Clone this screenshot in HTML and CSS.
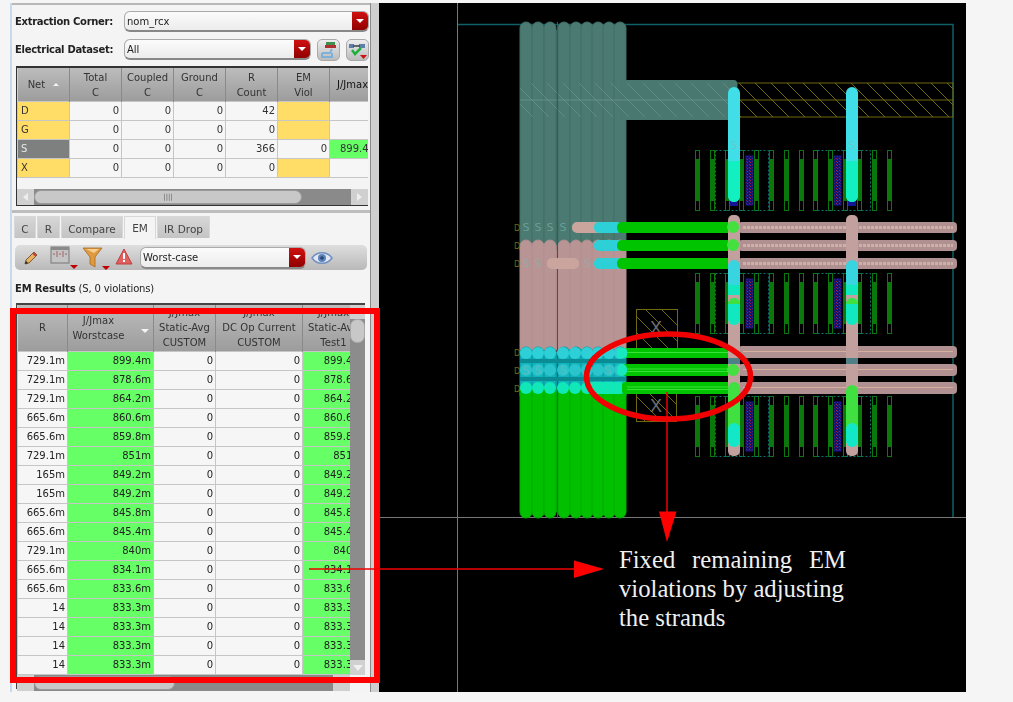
FILE: index.html
```html
<!DOCTYPE html>
<html lang="en">
<head>
<meta charset="utf-8">
<title>EM Results</title>
<link rel="stylesheet" href="styles.css">
</head>
<body>
<div class="page">
  <section class="panel">
    <div class="main">
      <div class="form-row first">
        <label class="form-label">Extraction Corner:</label>
        <div class="combo wide"><span class="combo-text">nom_rcx</span><span class="combo-btn"></span></div>
      </div>
      <div class="form-row">
        <label class="form-label">Electrical Dataset:</label>
        <div class="combo narrow"><span class="combo-text">All</span><span class="combo-btn"></span></div>
        <button class="icon-btn first-btn"><svg width="19" height="18" viewBox="0 0 19 18"><rect x="7" y="1" width="9" height="3" fill="#3f8f4f"/><rect x="6" y="4" width="11" height="3" fill="#b03030"/><path d="M3 12h8l2-4M3 12v4h10v-4" fill="none" stroke="#7fb0d8" stroke-width="2"/></svg></button>
        <button class="icon-btn"><svg width="19" height="18" viewBox="0 0 19 18"><rect x="1" y="3" width="5" height="4" fill="#5f7fa8"/><rect x="11" y="3" width="6" height="4" fill="#5f7fa8"/><path d="M5 5h7" stroke="#344" stroke-width="1.5"/><path d="M4 9l3 4 6-6" fill="none" stroke="#20b040" stroke-width="2.5"/><path d="M12 14h7l-3.500 4z" fill="#d01010"/></svg></button>
      </div>
      <div class="frame-top">
        <div class="clip-top">
          <table class="grid top-grid">
            <thead>
              <tr><th class="net">Net <span class="sort-up"></span></th><th>Total<br>C</th><th>Coupled<br>C</th><th>Ground<br>C</th><th>R<br>Count</th><th>EM<br>Viol</th><th class="last-head">J/Jmax</th></tr>
            </thead>
            <tbody>
              <tr><td class="name warn">D</td><td>0</td><td>0</td><td>0</td><td>42</td><td class="warn"></td><td></td></tr>
              <tr><td class="name warn">G</td><td>0</td><td>0</td><td>0</td><td>0</td><td class="warn"></td><td></td></tr>
              <tr><td class="name sel">S</td><td>0</td><td>0</td><td>0</td><td>366</td><td>0</td><td class="ok">899.4m</td></tr>
              <tr><td class="name warn">X</td><td>0</td><td>0</td><td>0</td><td>0</td><td class="warn"></td><td></td></tr>
            </tbody>
          </table>
        </div>
        <div class="hscroll top-scroll">
          <span class="sb-btn"><span class="arrow-left"></span></span>
          <span class="sb-track"><span class="sb-thumb thumb-top">||||</span></span>
          <span class="sb-btn"><span class="arrow-right"></span></span>
        </div>
      </div>
      <div class="divider"></div>
      <div class="tabs">
        <span class="tab tab-c">C</span><span class="tab tab-r">R</span><span class="tab tab-compare">Compare</span><span class="tab tab-em active">EM</span><span class="tab tab-ir">IR Drop</span>
      </div>
      <div class="toolbar">
        <svg class="tool pencil" width="16" height="16" viewBox="0 0 16 16"><path d="M2 14l1-4 8-8 3 3-8 8z" fill="#e8b060" stroke="#7a5a30"/><path d="M2 14l1-3 2 2z" fill="#222"/><path d="M10 3l3 3" stroke="#c04040" stroke-width="2"/></svg>
        <svg class="tool table-ico" width="30" height="26" viewBox="0 0 30 26"><rect x="1" y="1" width="18" height="16" fill="#c4c4c4" stroke="#777"/><rect x="1" y="1" width="18" height="3" fill="#8a8a8a"/><path d="M7 5v6M13 5v6M4 7v2M10 7v2M16 7v2" stroke="#a06060"/><path d="M20 19h8l-4 4z" fill="#c00000"/></svg>
        <svg class="tool funnel" width="30" height="26" viewBox="0 0 30 26"><path d="M1 1h19l-7 9v10l-5-3v-7z" fill="#e09a40" stroke="#a86a20" stroke-width=".8"/><path d="M4 2h13l-5 4z" fill="#f6cf90"/><path d="M20 19h8l-4 4z" fill="#c00000"/></svg>
        <svg class="tool warn-ico" width="18" height="18" viewBox="0 0 18 18"><path d="M9 1l8 15H1z" fill="#e06060" stroke="#c04040"/><path d="M8 5h2v6H8zM8 12h2v2H8z" fill="#fff"/></svg>
        <div class="combo tool-combo"><span class="combo-text">Worst-case</span><span class="combo-btn"></span></div>
        <svg class="tool eye" width="22" height="14" viewBox="0 0 22 14"><path d="M1 7c5-7 15-7 20 0-5 7-15 7-20 0z" fill="#dfe8f4" stroke="#6f8fc0" stroke-width="1.500"/><circle cx="11" cy="7" r="4" fill="#5f82b8"/><circle cx="11" cy="7" r="1.800" fill="#26456f"/></svg>
      </div>
      <p class="results-title"><b>EM Results</b> (S, 0 violations)</p>
      <div class="frame-bottom">
        <div class="bottom-body">
          <div class="clip-bottom">
            <table class="grid bottom-grid">
              <thead>
                <tr><th>R</th><th class="worst">J/Jmax<br>Worstcase<span class="sort-down"></span></th><th>J/Jmax<br>Static-Avg<br>CUSTOM</th><th>J/Jmax<br>DC Op Current<br>CUSTOM</th><th>J/Jmax<br>Static-Avg<br>Test1</th></tr>
              </thead>
              <tbody>
                <tr><td>729.1m</td><td class="ok">899.4m</td><td>0</td><td>0</td><td class="ok">899.4m</td></tr>
                <tr><td>729.1m</td><td class="ok">878.6m</td><td>0</td><td>0</td><td class="ok">878.6m</td></tr>
                <tr><td>729.1m</td><td class="ok">864.2m</td><td>0</td><td>0</td><td class="ok">864.2m</td></tr>
                <tr><td>665.6m</td><td class="ok">860.6m</td><td>0</td><td>0</td><td class="ok">860.6m</td></tr>
                <tr><td>665.6m</td><td class="ok">859.8m</td><td>0</td><td>0</td><td class="ok">859.8m</td></tr>
                <tr><td>729.1m</td><td class="ok">851m</td><td>0</td><td>0</td><td class="ok">851m</td></tr>
                <tr><td>165m</td><td class="ok">849.2m</td><td>0</td><td>0</td><td class="ok">849.2m</td></tr>
                <tr><td>165m</td><td class="ok">849.2m</td><td>0</td><td>0</td><td class="ok">849.2m</td></tr>
                <tr><td>665.6m</td><td class="ok">845.8m</td><td>0</td><td>0</td><td class="ok">845.8m</td></tr>
                <tr><td>665.6m</td><td class="ok">845.4m</td><td>0</td><td>0</td><td class="ok">845.4m</td></tr>
                <tr><td>729.1m</td><td class="ok">840m</td><td>0</td><td>0</td><td class="ok">840m</td></tr>
                <tr><td>665.6m</td><td class="ok">834.1m</td><td>0</td><td>0</td><td class="ok">834.1m</td></tr>
                <tr><td>665.6m</td><td class="ok">833.6m</td><td>0</td><td>0</td><td class="ok">833.6m</td></tr>
                <tr><td>14</td><td class="ok">833.3m</td><td>0</td><td>0</td><td class="ok">833.3m</td></tr>
                <tr><td>14</td><td class="ok">833.3m</td><td>0</td><td>0</td><td class="ok">833.3m</td></tr>
                <tr><td>14</td><td class="ok">833.3m</td><td>0</td><td>0</td><td class="ok">833.3m</td></tr>
                <tr><td>14</td><td class="ok">833.3m</td><td>0</td><td>0</td><td class="ok">833.3m</td></tr>
              </tbody>
            </table>
          </div>
          <div class="vscroll">
            <span class="vs-up"></span>
            <span class="vs-thumb"></span>
            <span class="vs-track"></span>
            <span class="vs-down"><span class="arrow-down"></span></span>
          </div>
        </div>
        <div class="hscroll bottom-scroll">
          <span class="sb-btn"></span>
          <span class="sb-track"><span class="sb-thumb thumb-bottom"></span></span>
          <span class="sb-btn"></span>
        </div>
      </div>
    </div>
    <div class="gutter"></div>
  </section>

  <section class="canvas">
    <svg class="layout" width="587" height="689" viewBox="379 3 587 689">
      <defs>
        <pattern id="hatch" patternUnits="userSpaceOnUse" width="16" height="16"><path d="M-1 -1L17 17" stroke="#6f6a10" stroke-width="1"/></pattern>
        <pattern id="hatch-soft" patternUnits="userSpaceOnUse" width="16" height="16"><path d="M-1 -1L17 17" stroke="#6f9a90" stroke-width="1"/></pattern>
        <pattern id="dots" patternUnits="userSpaceOnUse" width="3" height="3"><rect width="3" height="3" fill="#14146e"/><rect width="1" height="1" fill="#a02040"/><rect x="2" y="2" width="1" height="1" fill="#a02040"/></pattern>
        <clipPath id="c-teal"><rect x="515" y="15" width="120" height="235"/></clipPath>
        <clipPath id="c-pink"><rect x="515" y="238" width="120" height="115"/></clipPath>
        <clipPath id="c-cyan"><rect x="515" y="346" width="120" height="50"/></clipPath>
        <clipPath id="c-green"><rect x="515" y="388" width="120" height="135"/></clipPath>
        <g id="strands">
          <rect x="520" width="12" height="496" rx="6"/><rect x="532" width="12" height="496" rx="6"/><rect x="544" width="12" height="496" rx="6"/>
          <rect x="558" width="12" height="496" rx="6"/><rect x="570" width="12" height="496" rx="6"/><rect x="581" width="12" height="496" rx="6"/>
          <rect x="592" width="12" height="496" rx="6"/><rect x="603" width="12" height="496" rx="6"/><rect x="614" width="12" height="496" rx="6"/>
        </g>
        <g id="bumps">
          <circle cx="526" r="6"/><circle cx="538" r="6"/><circle cx="550" r="6"/><circle cx="563" r="6"/><circle cx="575" r="6"/><circle cx="587" r="6"/><circle cx="598" r="6"/><circle cx="609" r="6"/><circle cx="620" r="6"/>
        </g>
        <g id="finger">
          <rect x=".5" y=".5" width="4" height="60" fill="none" stroke="#0a780a"/>
          <rect x="1" y="9" width="3" height="42" fill="#0a780a"/>
        </g>
        <g id="block">
          <use href="#finger" x="695"/><use href="#finger" x="710"/><use href="#finger" x="725"/><use href="#finger" x="739"/><use href="#finger" x="754"/><use href="#finger" x="769"/><use href="#finger" x="784"/>
          <use href="#finger" x="799"/><use href="#finger" x="813"/><use href="#finger" x="828"/><use href="#finger" x="843"/><use href="#finger" x="857"/><use href="#finger" x="872"/><use href="#finger" x="887"/>
          <rect x="715.500" y=".5" width="53" height="60" fill="none" stroke="#0f7070" stroke-dasharray="2 2"/>
          <rect x="817.500" y=".5" width="53" height="60" fill="none" stroke="#0f7070" stroke-dasharray="2 2"/>
          <rect x="746" y="6" width="7" height="49" fill="url(#dots)" stroke="#141496"/>
          <rect x="834" y="6" width="7" height="49" fill="url(#dots)" stroke="#141496"/>
          <rect x="730" y="48" width="8" height="8" fill="#141496"/>
          <rect x="848" y="48" width="8" height="8" fill="#141496"/>
        </g>
      </defs>

      <path class="teal-line" d="M457 24.500H953V517"/>
      <path class="cross" d="M457.500 3V692M379 517.500H966"/>

      <g transform="translate(0 150)"><use href="#block"/></g>
      <g transform="translate(0 273)"><use href="#block"/></g>
      <g transform="translate(0 396)"><use href="#block"/></g>

      <rect x="737" y="83" width="216" height="34" fill="url(#hatch)" stroke="#6f6a10"/>
      <path d="M737 100H953" stroke="#6f6a10"/>

      <rect x="636.500" y="309.500" width="41" height="40" fill="url(#hatch)" stroke="#6f6a10"/>
      <rect x="636.500" y="390.500" width="40" height="31" fill="url(#hatch)" stroke="#6f6a10"/>
      <text class="x-label" x="656" y="334">X</text>
      <text class="x-label" x="656" y="412">X</text>

      <rect x="520" y="240" width="106" height="110" class="base-pink"/>
      <rect x="520" y="30" width="106" height="215" class="base-teal"/>
      <rect x="520" y="352" width="106" height="40" class="base-cyan"/>
      <rect x="520" y="392" width="106" height="120" class="base-green"/>

      <g clip-path="url(#c-teal)"><use href="#strands" y="22" class="st-teal"/></g>
      <rect x="620" y="80" width="117" height="40" rx="3" fill="#48786f"/>
      <rect x="520" y="83" width="217" height="34" fill="url(#hatch-soft)" opacity=".55"/>
      <path d="M520 100H737" stroke="#6f9a90" opacity=".7"/>
      <g clip-path="url(#c-pink)"><use href="#strands" y="240" class="st-pink"/></g>
      <g clip-path="url(#c-cyan)"><use href="#strands" y="347" class="st-cyan"/></g>
      <g clip-path="url(#c-green)"><use href="#strands" y="22" class="st-green"/></g>
      <path d="M557.500 22V518" stroke="#3a5a56" stroke-width="1"/>

      <rect x="520" y="359" width="106" height="4" fill="#0a8c94"/>
      <rect x="520" y="377" width="106" height="4" fill="#0a8c94"/>
      <use href="#bumps" y="353" class="b-cyan"/>
      <use href="#bumps" y="370" class="b-cyan2"/>
      <use href="#bumps" y="388" class="b-mint"/>
      <rect x="585" y="382" width="41" height="12" rx="6" fill="#10e8b8"/>

      <g class="pink-bars">
        <rect x="738" y="222" width="219" height="11" rx="4"/><rect x="738" y="240" width="219" height="11" rx="4"/><rect x="738" y="258" width="219" height="11" rx="4"/>
        <rect x="738" y="346" width="219" height="12" rx="4"/><rect x="738" y="364" width="219" height="12" rx="4"/><rect x="738" y="382" width="219" height="12" rx="4"/>
      </g>
      <path class="pink-tex" d="M743 227.500H953M743 245.500H953M743 263.500H953"/>
      <path class="pink-thin" d="M743 351.500H953M743 369.500H953M743 387.500H953"/>

      <rect x="572" y="222" width="36" height="11" rx="5" fill="#c9a59e"/>
      <rect x="547" y="258" width="32" height="11" rx="5" fill="#c9a59e"/>
      <rect x="594" y="222" width="28" height="11" rx="5" fill="#2ed0d8"/>
      <rect x="594" y="240" width="28" height="11" rx="5" fill="#2ed0d8"/>
      <rect x="594" y="258" width="28" height="11" rx="5" fill="#2ed0d8"/>
      <g class="green-bars">
        <rect x="617" y="222" width="121" height="11" rx="5"/><rect x="617" y="240" width="121" height="11" rx="5"/><rect x="617" y="258" width="121" height="11" rx="5"/>
        <rect x="622" y="348" width="116" height="10" rx="3"/><rect x="622" y="364" width="116" height="12" rx="3"/><rect x="622" y="382" width="116" height="12" rx="3"/>
      </g>
      <path class="green-thin" d="M627 352.500H732M627 369H732M627 371.500H732M627 387H732M627 389.500H732"/>
      <rect x="617" y="348" width="10" height="10" rx="3" fill="#18e8c0"/>
      <rect x="617" y="364" width="10" height="12" rx="5" fill="#18e8c0"/>

      <g class="v-pink"><rect x="728" y="215" width="12" height="241" rx="5"/><rect x="846" y="215" width="12" height="241" rx="5"/></g>
      <rect x="728" y="358" width="12" height="6" fill="#4f8088"/>
      <rect x="846" y="358" width="12" height="6" fill="#4f8088"/>
      <g class="ends"><circle cx="733" cy="227" r="6"/><circle cx="733" cy="245" r="6"/><circle cx="733" cy="370" r="6"/></g>

      <rect x="728" y="87" width="12" height="115" rx="6" fill="#40dfe8"/>
      <rect x="846" y="87" width="12" height="115" rx="6" fill="#40dfe8"/>
      <path d="M728 161h12v35a6 6 0 0 1-12 0z" fill="#12efc0"/>
      <path d="M846 161h12v35a6 6 0 0 1-12 0z" fill="#12efc0"/>

      <rect x="728" y="260" width="12" height="34" rx="6" fill="#38d4e0"/>
      <rect x="846" y="260" width="12" height="34" rx="6" fill="#38d4e0"/>
      <rect x="728" y="285" width="12" height="10" fill="#12e8c0"/>
      <rect x="846" y="285" width="12" height="10" fill="#12e8c0"/>
      <rect x="728" y="298" width="12" height="27" rx="6" fill="#12e8c0"/>
      <rect x="846" y="298" width="12" height="27" rx="6" fill="#12e8c0"/>
      <path d="M728 304a6 6 0 0 1 12 0" fill="#40e040"/>
      <path d="M846 304a6 6 0 0 1 12 0" fill="#40e040"/>

      <rect x="728" y="382" width="12" height="50" rx="6" fill="#3fe03f"/>
      <rect x="846" y="385" width="12" height="47" rx="6" fill="#3fe03f"/>
      <rect x="728" y="423" width="12" height="24" rx="6" fill="#12e8c8"/>
      <rect x="846" y="423" width="12" height="24" rx="6" fill="#12e8c8"/>

      <g class="s-labels">
        <text x="526" y="231">S</text><text x="538" y="231">S</text><text x="550" y="231">S</text><text x="563" y="231">S</text>
        <text x="526" y="267">S</text><text x="538" y="267">S</text><text x="587" y="267">S</text>
        <text x="526" y="374">S</text><text x="538" y="374">S</text><text x="563" y="374">S</text><text x="608" y="374">S</text>
        <text x="734" y="149">S</text><text x="852" y="149">S</text>
      </g>
      <g class="d-labels">
        <text x="517" y="231">D</text><text x="517" y="249">D</text><text x="517" y="267">D</text>
        <text x="517" y="356">D</text><text x="517" y="374">D</text><text x="517" y="392">D</text>
      </g>
    </svg>
  </section>

  <svg class="marks" width="1013" height="702" viewBox="0 0 1013 702">
    <rect x="13" y="311" width="364" height="369" fill="none" stroke="#ff0000" stroke-width="6"/>
    <ellipse cx="668.500" cy="376.500" rx="82" ry="42.500" fill="none" stroke="#f00000" stroke-width="5.500"/>
    <path d="M667 392V512M309 569H575" stroke="#f00000" stroke-width="1.500" fill="none"/>
    <path d="M659 511.500H676.500L667 542zM574 560.500V578L604 569z" fill="#ff0000"/>
  </svg>
  <p class="note"><span class="note-line spread">Fixed remaining EM</span><span class="note-line">violations by adjusting</span><span class="note-line">the strands</span></p>
</div>
</body>
</html>
```

FILE: styles.css
```css
* { box-sizing: border-box; }
html, body { margin: 0; padding: 0; }
body { background: #f5f5f5; font-family: "DejaVu Sans", sans-serif; color: #222; overflow: hidden; }

.page { position: relative; width: 1013px; height: 702px; padding: 3px 0 0 10px; display: flex; align-items: flex-start; }

/* left panel */
.panel { width: 369px; height: 689px; display: flex; border-left: 2px solid #c5d9ef; filter: blur(.3px); flex: none; }
.main { width: 358px; flex: none; background: #f4f4f4; border-top: 2px solid #b8b8b8; font-size: 10px; }
.gutter { width: 9px; flex: none; background: #cfcfcf; border-left: 1px solid #8a8a8a; }

.form-row { display: flex; align-items: center; height: 21px; margin: 7px 0 0 3px; }
.form-row.first { margin-top: 6px; }
.form-label { width: 109px; font-weight: bold; font-size: 10px; letter-spacing: -.3px; flex: none; }
.combo { height: 21px; display: flex; justify-content: space-between; background: linear-gradient(#fbfbfb, #ececec); border: 1px solid #aaa; border-bottom: 2px solid #888; border-radius: 6px; overflow: hidden; }
.combo.wide { width: 245px; }
.combo.narrow { width: 187px; }
.combo-text { padding: 3px 0 0 2px; font-size: 10px; line-height: 14px; }
.combo-btn { width: 16px; background: linear-gradient(#d01010, #900000); display: flex; align-items: center; justify-content: center; }
.combo-btn::after { content: ""; border: 4px solid transparent; border-top: 4px solid #fff; border-bottom: 0; }
.icon-btn { width: 23px; height: 22px; margin-left: 6px; padding: 0; background: linear-gradient(#eee, #bbb); border: 1px solid #aaa; border-radius: 5px; display: flex; align-items: center; justify-content: center; }
.first-btn { margin-left: 6px; }

.frame-top { margin: 6px 0 0 4px; width: 352px; height: 140px; border-top: 2px solid #333; border-left: 1px solid #333; border-bottom: 1px solid #333; display: flex; flex-direction: column; }
.clip-top { height: 120px; overflow: hidden; }
.grid { border-collapse: collapse; table-layout: fixed; font-size: 10px; background: #f6f6f6; }
.grid th { background: linear-gradient(#bcbcbc, #9c9c9c); font-weight: normal; border-right: 1px solid #8a8a8a; border-left: 1px solid #d0d0d0; text-align: center; line-height: 15px; padding: 0; color: #333; }
.grid td { height: 19px; padding: 0 2px 0 0; border: 1px solid #c6c6c6; text-align: right; white-space: nowrap; overflow: hidden; line-height: 14px; }
.top-grid { width: 364px; }
.top-grid th { height: 33px; width: 52px; padding-top: 1px; }
.top-grid th.last-head { width: 52px; white-space: nowrap; text-align: left; padding-left: 7px; color: #111; }
.top-grid td { color: #333; }
.top-grid td.name { text-align: left; padding-left: 3px; }
.warn { background: #ffdd66; }
.sel { background: #7d807e; color: #e8e8e8 !important; }
.ok { background: #66ff66; }
.top-grid td.ok { padding-right: 0; text-align: left; padding-left: 10px; }
.sort-up { display: inline-block; margin: 0 0 2px 5px; border: 3px solid transparent; border-bottom: 3px solid #f4f4f4; border-top: 0; }
.sort-down { display: block; position: absolute; right: 4px; top: 24px; border: 4px solid transparent; border-top: 4px solid #f4f4f4; border-bottom: 0; }
.worst { position: relative; }

.hscroll { display: flex; height: 16px; flex: none; }
.sb-btn { width: 17px; background: #d0d0d0; display: flex; align-items: center; justify-content: center; flex: none; }
.sb-track { flex: 1; background: #8a8a8a; display: block; }
.sb-thumb { display: block; height: 14px; margin-top: 1px; background: #c8c8c8; border: 1px solid #999; border-radius: 7px; color: #666; font-size: 7px; line-height: 12px; text-align: center; }
.thumb-top { width: 268px; }
.thumb-bottom { width: 141px; }
.arrow-left { border: 4px solid transparent; border-right: 5px solid #eee; border-left: 0; }
.arrow-right { border: 4px solid transparent; border-left: 5px solid #eee; border-right: 0; }
.top-scroll { margin-top: 1px; }

.divider { height: 3px; margin-top: 4px; background: #bdbdbd; }

.tabs { display: flex; gap: 1px; margin: 3px 0 0 2px; height: 22px; }
.tab { height: 22px; display: flex; align-items: center; justify-content: center; padding-top: 3px; background: linear-gradient(#d6d6d6, #c4c4c4); border: 1px solid #d8d8d8; border-bottom: 0; font-size: 10.500px; color: #444; flex: none; }
.tab.active { background: #f4f4f4; height: 23px; padding-top: 0; }
.tab-c { width: 22px; }
.tab-r { width: 23px; }
.tab-compare { width: 62px; }
.tab-em { width: 32px; }
.tab-ir { width: 53px; }

.toolbar { display: flex; align-items: center; height: 25px; margin: 7px 0 0 3px; width: 352px; background: linear-gradient(#dedede, #b9b9b9); border-radius: 5px; position: relative; }
.tool { display: block; flex: none; }
.pencil { margin-left: 8px; }
.table-ico { margin: 3px 0 0 11px; }
.funnel { margin: 4px 0 0 2px; }
.warn-ico { margin: -1px 0 0 3px; }
.tool-combo { width: 166px; margin-left: 7px; height: 22px; }
.tool-combo .combo-btn { width: 16px; }
.eye { margin-left: 5px; }

.results-title { margin: 13px 0 0 3px; font-size: 10px; line-height: 12px; letter-spacing: -.15px; }

.frame-bottom { margin: 8px 0 0 4px; width: 349px; height: 386px; border-top: 2px solid #444; border-left: 1px solid #444; display: flex; flex-direction: column; }
.bottom-body { display: flex; height: 370px; flex: none; }
.clip-bottom { width: 333px; overflow: hidden; flex: none; }
.bottom-grid { width: 347px; }
.bottom-grid th { height: 46px; line-height: 15px; white-space: nowrap; letter-spacing: .05px; }
.bottom-grid th:nth-child(1) { width: 50px; }
.bottom-grid th:nth-child(2) { width: 86px; padding-right: 24px; }
.bottom-grid th:nth-child(3) { width: 62px; }
.bottom-grid th:nth-child(4) { width: 87px; }
.bottom-grid th:nth-child(5) { width: 62px; }
.vscroll { width: 15px; display: flex; flex-direction: column; background: #8c8c8c; flex: none; }
.vs-up { height: 14px; background: #cfcfcf; }
.vs-thumb { height: 24px; background: #c8c8c8; border: 1px solid #a8a8a8; border-radius: 7px; }
.vs-track { flex: 1; }
.vs-down { height: 15px; background: #d0d0d0; display: flex; align-items: center; justify-content: center; }
.arrow-down { border: 5px solid transparent; border-top: 6px solid #f0f0f0; border-bottom: 0; }
.bottom-scroll { width: 333px; background: #8a8a8a; }

/* layout canvas */
.canvas { width: 587px; height: 689px; background: #000; flex: none; }
.layout { display: block; }
.teal-line { fill: none; stroke: #0f6068; stroke-width: 1.500; }
.cross { fill: none; stroke: #777; stroke-width: 1; }
.base-teal { fill: #3f6f68; }
.base-pink { fill: #ac8a8a; }
.base-cyan { fill: #0aa0a8; }
.base-green { fill: #00a800; }
.st-teal { fill: #4a7a71; stroke: #436f67; stroke-width: 1; }
.st-pink { fill: #b89494; stroke: #b28e8e; stroke-width: 1; }
.st-cyan { fill: #12b4bc; stroke: #0a98a0; stroke-width: 1; }
.st-green { fill: #00c000; stroke: #00ae00; stroke-width: 1; }
.b-cyan { fill: #2ed0d8; }
.b-cyan2 { fill: #2ac4cc; }
.b-mint { fill: #10e8b8; }
.pink-bars rect { fill: #b09090; }
.pink-tex { stroke: #cdb0a6; stroke-width: 3; stroke-dasharray: 3 1; fill: none; }
.pink-thin { stroke: #d6b09a; stroke-width: 1; fill: none; }
.green-bars rect { fill: #00c400; }
.green-thin { stroke: #3ae03a; stroke-width: 1; fill: none; }
.v-pink rect { fill: #c2a09e; }
.ends circle { fill: #44e040; }
.x-label { font-family: "Liberation Sans", sans-serif; font-size: 18px; fill: #6e6e6e; text-anchor: middle; }
.s-labels text { font-family: "DejaVu Sans", sans-serif; font-size: 11px; fill: #7fb8b0; fill-opacity: .6; text-anchor: middle; }
.d-labels text { font-family: "DejaVu Sans", sans-serif; font-size: 8px; fill: #6f6a10; text-anchor: middle; }

/* annotations */
.marks { position: absolute; left: 0; top: 0; pointer-events: none; }
.note { position: absolute; left: 619px; top: 545px; width: 227px; margin: 0; font-family: "Liberation Serif", serif; font-size: 24.700px; line-height: 29px; color: #f0f0f0; }
.note-line { display: block; white-space: nowrap; }
.note-line.spread { white-space: normal; text-align: justify; text-align-last: justify; }
```
